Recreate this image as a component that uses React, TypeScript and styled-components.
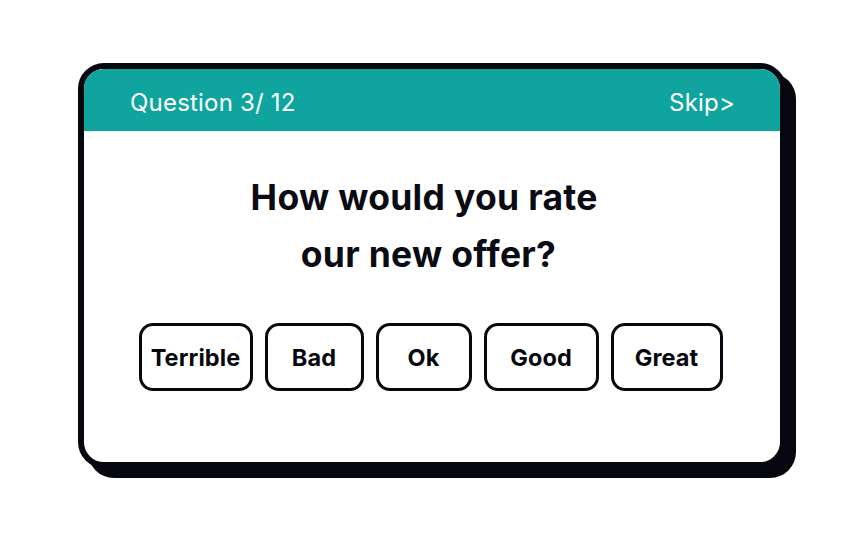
import styled, { createGlobalStyle } from 'styled-components'

const GlobalStyle = createGlobalStyle`
  html, body {
    margin: 0;
    padding: 0;
    background: #ffffff;
  }
  body {
    font-family: Inter, 'Noto Sans', sans-serif;
    color: #0b0b14;
  }
`

const Page = styled.div`
  width: 864px;
  height: 540px;
  padding: 63px 0 0 78px;
  box-sizing: border-box;
`

const Card = styled.div`
  width: 708px;
  height: 405px;
  box-sizing: border-box;
  background: #fff;
  border: 6px solid #07070f;
  border-radius: 26px;
  box-shadow: 10px 10px 0 #07070f;
  overflow: hidden;
  display: flex;
  flex-direction: column;
`

const Header = styled.div`
  height: 62px;
  box-sizing: border-box;
  background: #0fa59e;
  color: #fff;
  display: flex;
  align-items: center;
  justify-content: space-between;
  padding: 4px 45px 0 46px;
  font-size: 24px;
  font-weight: 400;
  letter-spacing: 0.2px;
`

const Body = styled.div`
  flex: 1;
  display: flex;
  flex-direction: column;
  align-items: center;
  padding-top: 38px;
`

const Title = styled.h1`
  margin: 0;
  padding-right: 7px;
  font-size: 35.5px;
  font-weight: 700;
  line-height: 57px;
  text-align: center;
  letter-spacing: 0.3px;
  white-space: pre;
`

const Options = styled.div`
  display: flex;
  gap: 12px;
  margin-top: 40px;
  margin-right: 3px;
`

const Option = styled.button<{ $w: number }>`
  width: ${(p) => p.$w}px;
  height: 68px;
  box-sizing: border-box;
  background: #fff;
  border: 3px solid #07070f;
  border-radius: 14px;
  font-family: Inter, 'Noto Sans', sans-serif;
  font-size: 23.5px;
  font-weight: 700;
  letter-spacing: 0.1px;
  color: #07070f;
  padding: 0;
  cursor: pointer;
`

const options = [
  { label: 'Terrible', w: 114 },
  { label: 'Bad', w: 99 },
  { label: 'Ok', w: 96 },
  { label: 'Good', w: 115 },
  { label: 'Great', w: 112 },
]

const App = () => {
  return (
    <Page>
      <GlobalStyle />
      <Card>
        <Header>
          <span>Question 3/ 12</span>
          <span>Skip&gt;</span>
        </Header>
        <Body>
          <Title>
            {'How would you rate '}
            <br />
            {'our new offer?'}
          </Title>
          <Options>
            {options.map((o) => (
              <Option key={o.label} $w={o.w} type="button">
                {o.label}
              </Option>
            ))}
          </Options>
        </Body>
      </Card>
    </Page>
  )
}

export default App
